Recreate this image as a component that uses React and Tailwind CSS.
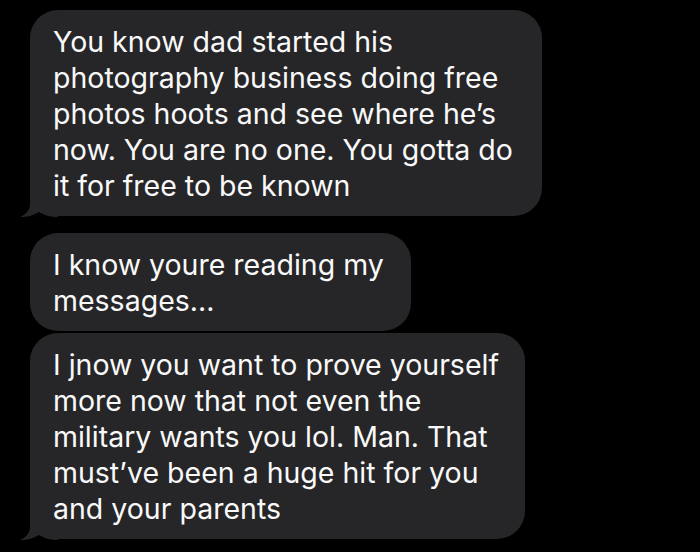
import React from "react";

function Tail() {
  return (
    <svg
      className="absolute left-[-10px] bottom-[-1px]"
      width="40"
      height="31"
      viewBox="0 0 40 31"
    >
      <path
        d="M10 0 L10 18 C10 24 6 28.5 0 31 C8 31 14 29 19 26 C24 29 30 31 38 31 L38 0 Z"
        fill="#262628"
      />
    </svg>
  );
}

function Bubble({ lines, width, tail }) {
  return (
    <div
      className={`relative bg-[#262628] rounded-[28px] pl-[23px] pt-[14px] pb-[12px] ${width}`}
    >
      {tail && <Tail />}
      <div className="relative">
        {lines.map((l, i) => (
          <div key={i} className="whitespace-nowrap">
            {l}
          </div>
        ))}
      </div>
    </div>
  );
}

export default function App() {
  return (
    <div
      className="w-[700px] h-[552px] bg-black overflow-hidden pt-[10px] pl-[30px] flex flex-col items-start text-[28.5px] leading-[36px] text-[#f9f9f9]"
      style={{ fontFamily: "Inter, 'Liberation Sans', sans-serif" }}
    >
      <Bubble
        width="w-[512px]"
        tail
        lines={[
          "You know dad started his",
          "photography business doing free",
          "photos hoots and see where he\u2019s",
          "now. You are no one. You gotta do",
          "it for free to be known",
        ]}
      />
      <div className="h-[17px]" />
      <Bubble
        width="w-[381px]"
        lines={["I know youre reading my", "messages..."]}
      />
      <div className="h-[2px]" />
      <Bubble
        width="w-[495px]"
        tail
        lines={[
          "I jnow you want to prove yourself",
          "more now that not even the",
          "military wants you lol. Man. That",
          "must\u2019ve been a huge hit for you",
          "and your parents",
        ]}
      />
    </div>
  );
}
